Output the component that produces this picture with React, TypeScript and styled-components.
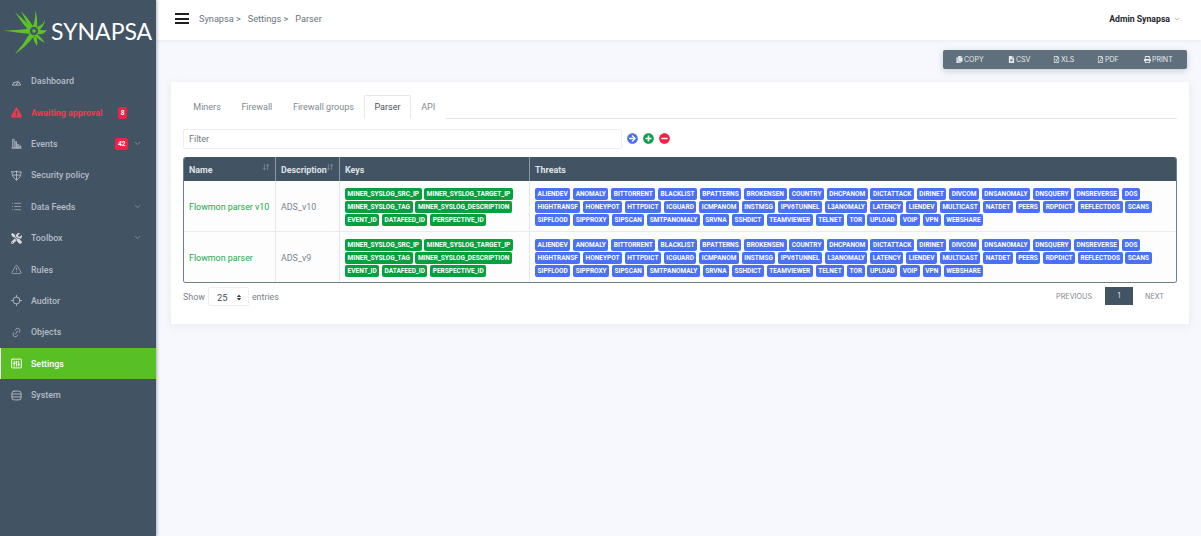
import React from "react";
import styled, { createGlobalStyle } from "styled-components";
import {
  List,
  TriangleAlert,
  Link2,
  ChevronDown,
  ArrowDownUp,
} from "lucide-react";
import {
  FaTools,
  FaExclamationTriangle,
  FaCopy,
  FaFileAlt,
  FaRegFileExcel,
  FaRegFilePdf,
  FaPrint,
  FaArrowCircleRight,
  FaPlusCircle,
  FaMinusCircle,
  FaSort,
} from "react-icons/fa";

const GlobalStyle = createGlobalStyle`
  html, body {
    margin: 0;
    height: 100%;
    overflow: hidden;
    background: #f7f8fd;
    font-family: Roboto, "Liberation Sans", sans-serif;
  }
  * { box-sizing: border-box; }
`;

const Page = styled.div`
  display: grid;
  grid-template-columns: 156px 1fr;
  height: 536px;
`;

const Sidebar = styled.aside`
  background: #425364;
  box-shadow: 1px 0 3px rgba(30, 40, 50, 0.35);
  z-index: 2;
`;

const Logo = styled.div`
  height: 65px;
  display: flex;
  align-items: flex-start;
  svg {
    flex: none;
  }
`;

const LogoText = styled.span`
  font-family: Lato, "Open Sans", sans-serif;
  font-weight: 400;
  font-size: 23px;
  line-height: 32px;
  color: #fff;
  margin: 15px 0 0 -1px;
`;

const Menu = styled.nav`
  display: flex;
  flex-direction: column;
`;

const MenuItem = styled.a<{ $active?: boolean; $alert?: boolean }>`
  height: 31.4px;
  display: flex;
  align-items: center;
  padding: 1px 0 0 ${(p) => (p.$active ? "10px" : "11px")};
  border-left: ${(p) => (p.$active ? "1px solid #fff" : "none")};
  background: ${(p) => (p.$active ? "#58c024" : "transparent")};
  color: ${(p) => (p.$active ? "#fff" : p.$alert ? "#f5384c" : "#b4bcc6")};
  font-size: 8.9px;
  font-weight: ${(p) => (p.$alert ? 700 : 500)};
  svg.icon {
    width: 11px;
    height: 11px;
    margin-right: 9px;
    flex: none;
  }
`;

const Badge = styled.span<{ $left: number }>`
  background: #ee2244;
  color: #fff;
  border-radius: 2px;
  font-size: 6.6px;
  font-weight: 700;
  line-height: 12px;
  height: 12px;
  padding: 0 2.5px;
  margin-left: auto;
  margin-right: ${(p) => p.$left}px;
`;

const MenuRow = styled.div`
  position: relative;
  display: flex;
  flex-direction: column;
  justify-content: center;
`;

const Chevron = styled(ChevronDown)`
  width: 9px;
  height: 9px;
  position: absolute;
  top: 11px;
  left: 133px;
  color: #8f9aa6;
`;

const Main = styled.main`
  display: flex;
  flex-direction: column;
  min-width: 0;
`;

const TopBar = styled.header`
  height: 40px;
  background: #fff;
  display: flex;
  align-items: center;
  padding: 0 20px 3px 19px;
  box-shadow: 0 1px 3px rgba(60, 70, 90, 0.08);
`;

const Burger = styled.div`
  width: 14px;
  height: 11px;
  display: flex;
  flex-direction: column;
  justify-content: space-between;
  margin-right: 10px;
  span {
    display: block;
    height: 2px;
    background: #1d1f22;
  }
`;

const Crumbs = styled.div`
  color: #6d7681;
  font-size: 9.2px;
  white-space: pre;
`;

const UserBox = styled.div`
  margin-left: auto;
  display: flex;
  align-items: center;
  gap: 3px;
  font-size: 8.7px;
  font-weight: 700;
  color: #23272c;
  svg {
    width: 8px;
    height: 8px;
    color: #8f98a3;
  }
`;

const Tools = styled.div`
  display: flex;
  justify-content: flex-end;
  padding: 10px 14px 0 0;
`;

const ExportBar = styled.div`
  width: 244px;
  height: 19px;
  display: flex;
  align-items: center;
  background: #5f6f7b;
  border-radius: 2px;
  box-shadow: 0 2px 6px rgba(90, 105, 130, 0.3);
  padding-left: 13px;
`;

const ExportButton = styled.span<{ $w: number }>`
  width: ${(p) => p.$w}px;
  display: flex;
  align-items: center;
  gap: 1px;
  color: #e8ebee;
  font-family: Inter, Roboto, sans-serif;
  font-size: 7px;
  svg {
    width: 7px;
    height: 7px;
  }
`;

const Card = styled.section`
  margin: 13px 12px 0 15px;
  height: 242px;
  background: #fff;
  padding: 13px 12px 0;
  box-shadow: 0 2px 8px rgba(90, 105, 140, 0.1);
`;

const Tabs = styled.div`
  display: flex;
  height: 24px;
  border-bottom: 1px solid #e6e9ec;
`;

const Tab = styled.span<{ $active?: boolean }>`
  height: 24px;
  padding: 0 9.3px;
  line-height: 23px;
  font-size: 9px;
  color: ${(p) => (p.$active ? "#4a525b" : "#808890")};
  background: #fff;
  border: 1px solid ${(p) => (p.$active ? "#e6e9ec" : "transparent")};
  border-bottom-color: ${(p) => (p.$active ? "#fff" : "transparent")};
  border-radius: 2px 2px 0 0;
`;

const FilterRow = styled.div`
  display: flex;
  align-items: center;
  margin-top: 10px;
  height: 20px;
`;

const FilterInput = styled.div`
  width: 439px;
  height: 20px;
  border: 1px solid #eceef1;
  border-radius: 2px;
  color: #6f7780;
  font-size: 9px;
  line-height: 19px;
  padding-left: 5px;
`;

const RoundIcons = styled.div`
  display: flex;
  gap: 5px;
  margin: -2px 0 0 5px;
  svg {
    width: 11px;
    height: 11px;
    display: block;
  }
`;

const Table = styled.table`
  width: 994px;
  height: 125.5px;
  margin-top: 8px;
  table-layout: fixed;
  border-collapse: separate;
  border-spacing: 0;
  border: 1px solid #6e7e8d;
  border-top: 0;
  border-radius: 3px;
  overflow: hidden;
`;

const Th = styled.th<{ $w: number }>`
  position: relative;
  width: ${(p) => p.$w}px;
  height: 24px;
  background: #425364;
  color: #dfe3e7;
  font-size: 8.9px;
  font-weight: 700;
  text-align: left;
  padding: 1px 5px 0;
  border-left: 1px solid #8b97a2;
  &:first-child {
    border-left: 0;
  }
  svg {
    position: absolute;
    top: 6px;
    right: 5px;
    width: 8px;
    height: 8px;
    color: #8f9aa6;
  }
`;

const Td = styled.td`
  background: #fdfdfd;
  padding: 3px 5px 0;
  font-size: 8.9px;
  color: #7a828b;
  white-space: nowrap;
  border-left: 1px solid #e5e7ea;
  border-bottom: 1px solid #e9ebed;
  &:first-child {
    border-left: 0;
  }
  tr:last-child & {
    border-bottom: 0;
  }
`;

const NameLink = styled.a`
  color: #21a84a;
`;

const Chips = styled.div`
  display: flex;
  flex-wrap: wrap;
  gap: 1px 2.7px;
`;

const Chip = styled.span<{ $color: string }>`
  height: 12px;
  line-height: 12px;
  padding: 0 2.6px;
  border-radius: 2px;
  background: ${(p) => p.$color};
  color: #fff;
  font-size: 6.5px;
  font-weight: 700;
  white-space: nowrap;
`;

const FooterRow = styled.div`
  display: flex;
  align-items: center;
  margin-top: 4.5px;
  height: 19px;
  color: #7a828b;
  font-size: 8.9px;
`;

const LengthSelect = styled.span`
  width: 41px;
  height: 19px;
  margin: 0 3px;
  display: flex;
  align-items: center;
  justify-content: space-between;
  padding: 1px 6px 0 8px;
  border: 1px solid #eceef1;
  border-radius: 2px;
  color: #454c54;
  font-size: 9.4px;
  svg {
    width: 6px;
    height: 7px;
    color: #30363c;
  }
`;

const Pager = styled.div`
  margin: -1px 0 0 auto;
  display: flex;
  align-items: center;
  font-family: Inter, Roboto, sans-serif;
  font-size: 7.2px;
  color: #7f878f;
  padding-right: 13px;
`;

const PageNumber = styled.span`
  width: 28px;
  height: 18px;
  line-height: 18px;
  margin: 0 12px 0 13px;
  text-align: center;
  background: #425364;
  color: #dfe3e7;
`;

const TiltedLink = styled(Link2)`
  transform: rotate(-60deg);
`;

const keys = [
  "MINER_SYSLOG_SRC_IP",
  "MINER_SYSLOG_TARGET_IP",
  "MINER_SYSLOG_TAG",
  "MINER_SYSLOG_DESCRIPTION",
  "EVENT_ID",
  "DATAFEED_ID",
  "PERSPECTIVE_ID",
];

const threats = [
  "ALIENDEV", "ANOMALY", "BITTORRENT", "BLACKLIST", "BPATTERNS", "BROKENSEN", "COUNTRY", "DHCPANOM",
  "DICTATTACK", "DIRINET", "DIVCOM", "DNSANOMALY", "DNSQUERY", "DNSREVERSE", "DOS",
  "HIGHTRANSF", "HONEYPOT", "HTTPDICT", "ICGUARD", "ICMPANOM", "INSTMSG", "IPV6TUNNEL", "L3ANOMALY",
  "LATENCY", "LIENDEV", "MULTICAST", "NATDET", "PEERS", "RDPDICT", "REFLECTDOS", "SCANS",
  "SIPFLOOD", "SIPPROXY", "SIPSCAN", "SMTPANOMALY", "SRVNA", "SSHDICT", "TEAMVIEWER", "TELNET", "TOR",
  "UPLOAD", "VOIP", "VPN", "WEBSHARE",
];

const rows = [
  { name: "Flowmon parser v10", desc: "ADS_v10" },
  { name: "Flowmon parser", desc: "ADS_v9" },
];

const line = { fill: "none", stroke: "currentColor", strokeWidth: 1, strokeLinecap: "round" as const, strokeLinejoin: "round" as const };

const DomeIcon = () => (
  <svg className="icon" viewBox="0 0 12 12" {...line}>
    <path d="M1.5 9.5 A4.8 4.8 0 0 1 10.5 9.5 Z" />
    <path d="M6 9.5 L7.5 5.5 M3 7 h.5 M9 7 h-.5" />
  </svg>
);

const BarsIcon = () => (
  <svg className="icon" viewBox="0 0 12 12" {...line} strokeWidth={0.9}>
    <path d="M.8 11 h10.4 M1.8 11 V1.5 h1.6 V11 M4.6 11 V4 h1.4 V11 M7.2 11 V7 h1.3 V11 M9.6 11 V8.5 h1 V11" />
  </svg>
);

const ShieldIcon = () => (
  <svg className="icon" viewBox="0 0 12 12" {...line}>
    <path d="M1 2 Q3.5 3 6 1.2 Q8.5 3 11 2 Q11 8 6 11 Q1 8 1 2 Z" />
    <path d="M6 1.5 V11 M2.5 5.5 H9.5" />
  </svg>
);

const TargetIcon = () => (
  <svg className="icon" viewBox="0 0 12 12" {...line}>
    <circle cx="6" cy="6" r="3.8" />
    <path d="M6 .5 V2.2 M6 9.8 V11.5 M.5 6 H2.2 M9.8 6 H11.5" />
  </svg>
);

const SettingsIcon = () => (
  <svg className="icon" viewBox="0 0 12 12" {...line}>
    <rect x="0.7" y="1.2" width="10.6" height="9.6" rx="0.6" />
    <path d="M3.5 3.5 V8.8 M2.5 6 H4.5 M6 3.5 V8.8 M5 4.5 H7 M8.5 3.5 V8.8 M7.5 7.2 H9.5" />
  </svg>
);

const StackIcon = () => (
  <svg className="icon" viewBox="0 0 12 12" {...line}>
    <rect x="1" y="1.2" width="10" height="9.6" rx="2.4" />
    <path d="M1 4.4 H11 M1 7.6 H11" />
  </svg>
);

const menu = [
  { label: "Dashboard", icon: <DomeIcon /> },
  { label: "Awaiting approval", icon: <FaExclamationTriangle className="icon" />, alert: true, badge: "8", right: 29 },
  { label: "Events", icon: <BarsIcon />, badge: "42", right: 28, chevron: true },
  { label: "Security policy", icon: <ShieldIcon /> },
  { label: "Data Feeds", icon: <List className="icon" strokeWidth={1.5} />, chevron: true },
  { label: "Toolbox", icon: <FaTools className="icon" color="#d5d9de" />, chevron: true },
  { label: "Rules", icon: <TriangleAlert className="icon" strokeWidth={1.5} /> },
  { label: "Auditor", icon: <TargetIcon /> },
  { label: "Objects", icon: <TiltedLink className="icon" strokeWidth={1.5} /> },
  { label: "Settings", icon: <SettingsIcon />, active: true },
  { label: "System", icon: <StackIcon /> },
];

const spikes = [
  "M33 28 Q20 30 4 30.5 Q20 33 32 34 Z",
  "M31 27 Q24 20 15 12 Q21 22 29 31 Z",
  "M33 26 Q28 18 21 11 Q25 20 30 28 Z",
  "M33 26 Q36 18 35 10 Q38 18 37 27 Z",
  "M36 27 Q42 26 45 20 Q44 27 38 31 Z",
  "M38 29 Q43 31 47 30 Q44 35 38 34 Z",
  "M37 34 Q42 38 45 43 Q40 41 35 36 Z",
  "M36 36 Q38 42 37 46 Q34 42 33 37 Z",
  "M30 33 Q24 44 15 54 Q27 46 34 36 Z",
];

const BurstLogo = () => (
  <svg width="52" height="58" viewBox="0 0 52 58" aria-hidden="true">
    {spikes.map((d) => (
      <path key={d} d={d} fill="#5cc327" />
    ))}
    <circle cx="34" cy="31" r="4.6" fill="#425364" stroke="#5cc327" strokeWidth="1" />
    <circle cx="34" cy="31" r="1.8" fill="#5cc327" />
  </svg>
);

export default function App() {
  return (
    <>
      <GlobalStyle />
      <Page>
        <Sidebar>
          <Logo>
            <BurstLogo />
            <LogoText>SYNAPSA</LogoText>
          </Logo>
          <Menu>
            {menu.map((m) => (
              <MenuRow key={m.label}>
                <MenuItem $active={m.active} $alert={m.alert}>
                  {m.icon}
                  {m.label}
                  {m.badge && <Badge $left={m.right ?? 0}>{m.badge}</Badge>}
                </MenuItem>
                {m.chevron && <Chevron />}
              </MenuRow>
            ))}
          </Menu>
        </Sidebar>
        <Main>
          <TopBar>
            <Burger>
              <span />
              <span />
              <span />
            </Burger>
            <Crumbs>{"Synapsa >   Settings >   Parser"}</Crumbs>
            <UserBox>
              Admin Synapsa
              <ChevronDown />
            </UserBox>
          </TopBar>
          <Tools>
            <ExportBar>
              <ExportButton $w={52}><FaCopy />COPY</ExportButton>
              <ExportButton $w={45}><FaFileAlt />CSV</ExportButton>
              <ExportButton $w={44}><FaRegFileExcel />XLS</ExportButton>
              <ExportButton $w={47}><FaRegFilePdf />PDF</ExportButton>
              <ExportButton $w={40}><FaPrint />PRINT</ExportButton>
            </ExportBar>
          </Tools>
          <Card>
            <Tabs>
              <Tab>Miners</Tab>
              <Tab>Firewall</Tab>
              <Tab>Firewall groups</Tab>
              <Tab $active>Parser</Tab>
              <Tab>API</Tab>
            </Tabs>
            <FilterRow>
              <FilterInput>Filter</FilterInput>
              <RoundIcons>
                <FaArrowCircleRight color="#4a70f0" />
                <FaPlusCircle color="#0a9e45" />
                <FaMinusCircle color="#ee2244" />
              </RoundIcons>
            </FilterRow>
            <Table>
              <thead>
                <tr>
                  <Th $w={91}>Name<ArrowDownUp /></Th>
                  <Th $w={64}>Description<ArrowDownUp /></Th>
                  <Th $w={190}>Keys</Th>
                  <Th $w={647}>Threats</Th>
                </tr>
              </thead>
              <tbody>
                {rows.map((r) => (
                  <tr key={r.name}>
                    <Td><NameLink>{r.name}</NameLink></Td>
                    <Td>{r.desc}</Td>
                    <Td>
                      <Chips>
                        {keys.map((k) => (
                          <Chip key={k} $color="#07a03f">{k}</Chip>
                        ))}
                      </Chips>
                    </Td>
                    <Td>
                      <Chips>
                        {threats.map((t) => (
                          <Chip key={t} $color="#4a70f5">{t}</Chip>
                        ))}
                      </Chips>
                    </Td>
                  </tr>
                ))}
              </tbody>
            </Table>
            <FooterRow>
              Show
              <LengthSelect>25<FaSort /></LengthSelect>
              entries
              <Pager>
                PREVIOUS
                <PageNumber>1</PageNumber>
                NEXT
              </Pager>
            </FooterRow>
          </Card>
        </Main>
      </Page>
    </>
  );
}
